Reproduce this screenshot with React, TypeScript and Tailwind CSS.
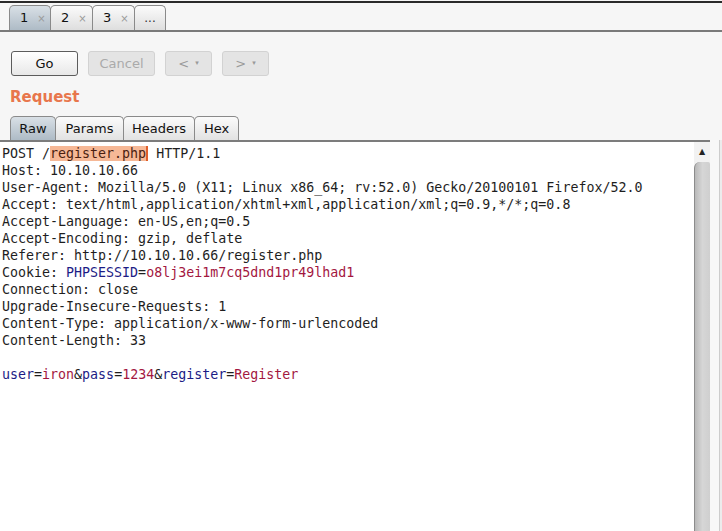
import React from "react";

const tabCls = "h-[25px] flex items-center border border-b-0 border-[#8a8a8a] rounded-t-[5px] -ml-px first:ml-0";

function TopTab({ label, active, close = true, w }: { label: string; active?: boolean; close?: boolean; w: string }) {
  return (
    <div
      className={`${tabCls} ${w} pl-[10px] gap-[9px] ${
        active ? "bg-gradient-to-b from-[#d9e0e6] to-[#aebbc6]" : "bg-gradient-to-b from-[#fbfbfb] to-[#dedede]"
      }`}
    >
      <span className="text-[13px] text-[#111]">{label}</span>
      {close && <span className="text-[10px] text-[#9a9a9a]">×</span>}
    </div>
  );
}

function SubTab({ label, active, w }: { label: string; active?: boolean; w: string }) {
  return (
    <div
      className={`h-[24px] ${w} flex items-center justify-center border border-b-0 border-[#8a8a8a] rounded-t-[5px] -ml-px first:ml-0 text-[13px] text-[#111] ${
        active ? "bg-gradient-to-b from-[#d9e0e6] to-[#aebbc6]" : "bg-gradient-to-b from-[#fbfbfb] to-[#e2e2e2]"
      }`}
    >
      {label}
    </div>
  );
}

const N = "text-[#1c1c86]";
const V = "text-[#a3173f]";

export default function App() {
  return (
    <div className="w-[722px] h-[531px] overflow-hidden bg-[#f6f6f6] flex flex-col font-['DejaVu_Sans',sans-serif]">
      {/* top request tabs */}
      <div className="border-t-2 border-[#2a2a2a] mt-px">
        <div className="flex items-end pl-[9px] pt-[2px] border-b-2 border-[#7a7a7a]">
          <TopTab label="1" active w="w-[42px]" />
          <TopTab label="2" w="w-[43px]" />
          <TopTab label="3" w="w-[43px]" />
          <div className={`${tabCls} w-[32px] justify-center bg-gradient-to-b from-[#fbfbfb] to-[#dedede] text-[12px] text-[#333]`}>...</div>
        </div>
      </div>

      {/* toolbar */}
      <div className="flex gap-[10px] pl-[11px] mt-[19px]">
        <button className="h-[25px] w-[67px] rounded-[3px] border border-[#5c5c5c] bg-gradient-to-b from-white to-[#e8e8e8] text-[13px] text-[#111]">
          Go
        </button>
        <button className="h-[25px] w-[67px] rounded-[3px] border border-[#d2d2d2] bg-[#e4e4e4] text-[13px] text-[#aaaaaa]">
          Cancel
        </button>
        <button className="h-[25px] w-[47px] rounded-[3px] border border-[#d2d2d2] bg-[#e4e4e4] text-[13px] text-[#9a9a9a] flex items-center justify-center gap-[6px]">
          <span>&lt;</span>
          <span className="text-[7px]">▾</span>
        </button>
        <button className="h-[25px] w-[47px] rounded-[3px] border border-[#d2d2d2] bg-[#e4e4e4] text-[13px] text-[#9a9a9a] flex items-center justify-center gap-[6px]">
          <span>&gt;</span>
          <span className="text-[7px]">▾</span>
        </button>
      </div>

      <div className="pl-[10px] mt-[12px] text-[15px] font-bold text-[#e8764c] leading-[18px]">Request</div>

      {/* sub tabs */}
      <div className="flex pl-[10px] mt-[10px]">
        <SubTab label="Raw" active w="w-[46px]" />
        <SubTab label="Params" w="w-[69px]" />
        <SubTab label="Headers" w="w-[72px]" />
        <SubTab label="Hex" w="w-[45px]" />
      </div>

      {/* editor */}
      <div className="flex flex-1 min-h-0">
        <div className="w-[710px] flex flex-col border-t-2 border-[#7c7c7c]">
          <div className="flex flex-1 min-h-0">
            <div className="flex-1 bg-white pl-[2px] pt-[3px] font-['DejaVu_Sans_Mono',monospace] text-[13.3px] leading-[17px] text-[#1e1e1e] whitespace-pre">
              <div>
                POST /<span className="bg-[#f6b896] text-[#4a1e10] border-r-2 border-[#e0602c]">register.php</span> HTTP/1.1
              </div>
              <div>Host: 10.10.10.66</div>
              <div>User-Agent: Mozilla/5.0 (X11; Linux x86_64; rv:52.0) Gecko/20100101 Firefox/52.0</div>
              <div>Accept: text/html,application/xhtml+xml,application/xml;q=0.9,*/*;q=0.8</div>
              <div>Accept-Language: en-US,en;q=0.5</div>
              <div>Accept-Encoding: gzip, deflate</div>
              <div>Referer: http://10.10.10.66/register.php</div>
              <div>
                Cookie: <span className={N}>PHPSESSID</span>=<span className={V}>o8lj3ei1m7cq5dnd1pr49lhad1</span>
              </div>
              <div>Connection: close</div>
              <div>Upgrade-Insecure-Requests: 1</div>
              <div>Content-Type: application/x-www-form-urlencoded</div>
              <div>Content-Length: 33</div>
              <div>&nbsp;</div>
              <div>
                <span className={N}>user</span>=<span className={V}>iron</span>&amp;<span className={N}>pass</span>=
                <span className={V}>1234</span>&amp;<span className={N}>register</span>=<span className={V}>Register</span>
              </div>
            </div>
            {/* scrollbar */}
            <div className="w-[16px] bg-[#f2f2f2] flex flex-col">
              <div className="h-[20px] flex items-center justify-center text-[8px] text-[#222]">▲</div>
              <div className="flex-1 rounded-tl-[6px] rounded-tr-[2px] border-l border-[#8c8c8c] bg-gradient-to-r from-[#b9b9b9] via-[#d6d6d6] to-[#cfcfcf]" />
            </div>
          </div>
        </div>
        <div className="flex-1 flex">
          <div className="w-[9px] bg-[#f8f8f8]" />
          <div className="w-px bg-[#cdcdcd]" />
          <div className="flex-1 bg-[#ececec]" />
        </div>
      </div>
    </div>
  );
}
